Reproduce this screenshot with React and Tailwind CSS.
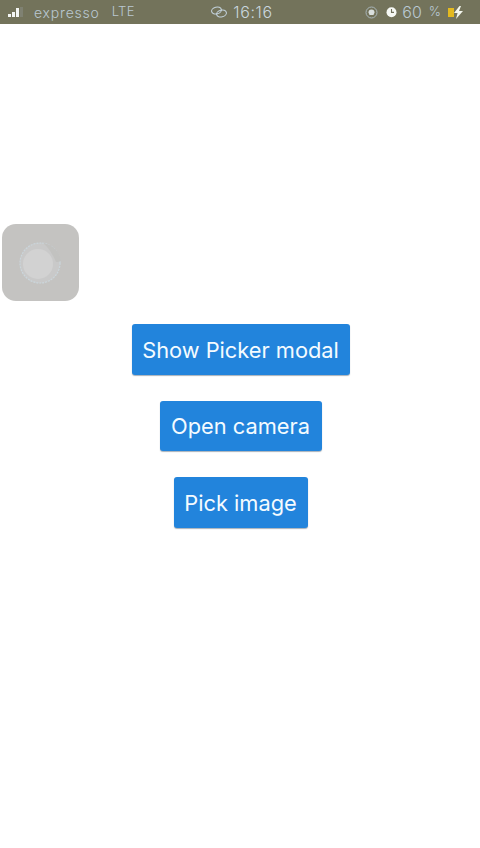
const font = { fontFamily: 'Inter, "Liberation Sans", sans-serif' };

function Signal() {
  return (
    <svg width="16" height="10" viewBox="0 0 16 10" className="mr-[10px]">
      <rect x="0" y="7" width="3" height="3" fill="#f4f6f4" />
      <rect x="4" y="5" width="3" height="5" fill="#f4f6f4" />
      <rect x="8" y="1" width="3" height="9" fill="#f4f6f4" />
      <rect x="12" y="0" width="3" height="10" fill="#7f8172" />
    </svg>
  );
}

function Link() {
  return (
    <svg width="18" height="12" viewBox="0 0 18 12" fill="none" stroke="#c3d2dc" strokeWidth="1.1">
      <ellipse cx="6.5" cy="4.5" rx="5" ry="3.4" transform="rotate(-14 6.5 4.5)" />
      <ellipse cx="11.5" cy="7.5" rx="5" ry="3.4" transform="rotate(-14 11.5 7.5)" />
    </svg>
  );
}

function Lock() {
  return (
    <svg width="13" height="13" viewBox="0 0 13 13" fill="none">
      <circle cx="6.5" cy="6.5" r="5.5" stroke="#a9b6ba" strokeWidth="1" />
      <path d="M3.5 6.5a3 3 0 0 1 6 0l-1 2.5h-4z" fill="#d9dfde" />
    </svg>
  );
}

function Alarm() {
  return (
    <svg width="11" height="12" viewBox="0 0 11 12">
      <circle cx="5.5" cy="6.2" r="5" fill="#f6f8f4" />
      <path d="M5.5 3v3.4H8" stroke="#70705c" strokeWidth="1.1" fill="none" />
    </svg>
  );
}

function Battery() {
  return (
    <svg width="17" height="13" viewBox="0 0 17 13">
      <rect x="0" y="2" width="6" height="9" fill="#e3b91f" />
      <path d="M11.5 0 6 7h3.6L8 13l7-8h-4l2-5z" fill="#f4f7ee" />
    </svg>
  );
}

function Thumb() {
  return (
    <div className="ml-[2px] flex h-[77px] w-[77px] items-center justify-center rounded-[14px] bg-[#c4c3c1]">
      <svg width="46" height="44" viewBox="0 0 46 44">
        <circle cx="22" cy="22" r="20" fill="#c9c9c9" stroke="#cbd6dc" strokeWidth="1.2" strokeDasharray="2 1" />
        <path d="M25 2c9 1 17 9 18 17-1 2-3 2-5 2-3-7-7-14-13-19z" fill="#c2c2c0" />
        <circle cx="20" cy="23" r="15" fill="#d2d2d2" />
      </svg>
    </div>
  );
}

function ActionButton({ children, className }) {
  return (
    <button
      className={`flex h-[50.5px] items-center justify-center rounded-[3px] bg-[#2284dc] pt-[2px] text-[21.8px] text-[#f4fbff] shadow-[0_1px_1px_rgba(60,80,100,0.45)] ${className}`}
      style={font}
    >
      {children}
    </button>
  );
}

export default function App() {
  return (
    <div className="flex h-[848px] w-[480px] flex-col overflow-hidden bg-white" style={font}>
      <header className="grid h-[24px] shrink-0 grid-cols-3 items-center bg-[#73735b] pl-[8px] pr-[15px] text-[14px] font-light text-[#b9c8d2]">
        <div className="flex items-center">
          <Signal />
          <span className="tracking-[0.8px]">expresso</span>
          <span className="ml-[12px] text-[13px] tracking-[0.3px]">LTE</span>
        </div>
        <div className="flex items-center justify-center gap-[5px] pl-[10px] text-[#c9d6de]">
          <Link />
          <span className="text-[16px] tracking-[0.6px]">16:16</span>
        </div>
        <div className="flex items-center justify-end">
          <Lock />
          <span className="ml-[8px]"><Alarm /></span>
          <span className="ml-[5px] text-[16px]">60</span>
          <span className="ml-[7px] text-[13px]">%</span>
          <span className="ml-[7px]"><Battery /></span>
        </div>
      </header>
      <main className="flex flex-col pt-[200px]">
        <Thumb />
        <div className="mt-[23px] flex flex-col items-center gap-[26px] pl-[1px]">
          <ActionButton className="w-[218px]">Show Picker modal</ActionButton>
          <ActionButton className="w-[162px]">Open camera</ActionButton>
          <ActionButton className="w-[134px]">Pick image</ActionButton>
        </div>
      </main>
    </div>
  );
}
